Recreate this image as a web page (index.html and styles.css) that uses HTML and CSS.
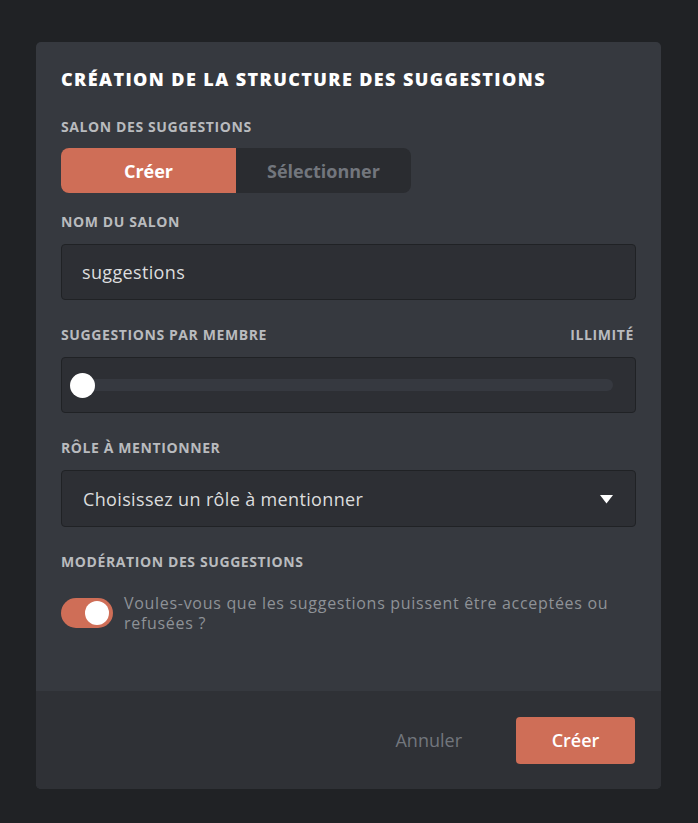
FILE: index.html
```html
<!DOCTYPE html>
<html lang="fr">
<head>
<meta charset="utf-8">
<title>Création de la structure des suggestions</title>
<link rel="stylesheet" href="styles.css">
</head>
<body>
<div class="modal">
  <div class="content">
    <h1 class="title">CRÉATION DE LA STRUCTURE DES SUGGESTIONS</h1>

    <div class="section first">
      <div class="label">SALON DES SUGGESTIONS</div>
      <div class="segmented">
        <div class="seg active">Créer</div>
        <div class="seg">Sélectionner</div>
      </div>
    </div>

    <div class="section">
      <div class="label">NOM DU SALON</div>
      <div class="field">suggestions</div>
    </div>

    <div class="section">
      <div class="label row">
        <span>SUGGESTIONS PAR MEMBRE</span>
        <span class="right">ILLIMITÉ</span>
      </div>
      <div class="field slider">
        <div class="track"><div class="knob"></div></div>
      </div>
    </div>

    <div class="section">
      <div class="label">RÔLE À MENTIONNER</div>
      <div class="field select">
        <span>Choisissez un rôle à mentionner</span>
        <svg class="caret" width="13" height="9" viewBox="0 0 13 9"><path d="M0 0H13L6.5 8.5Z" fill="#ffffff"/></svg>
      </div>
    </div>

    <div class="section">
      <div class="label">MODÉRATION DES SUGGESTIONS</div>
      <div class="switch-row">
        <div class="switch"><div class="switch-knob"></div></div>
        <div class="switch-text">Voules-vous que les suggestions puissent être acceptées ou refusées ?</div>
      </div>
    </div>
  </div>
  <div class="footer">
    <button class="btn-link">Annuler</button>
    <button class="btn-primary">Créer</button>
  </div>
</div>
</body>
</html>
```

FILE: styles.css
```css
html, body {
  margin: 0;
  padding: 0;
  background: #202225;
  font-family: "Open Sans", "Noto Sans", sans-serif;
}

body {
  width: 698px;
  height: 823px;
  overflow: hidden;
}

.modal {
  margin: 42px 0 0 36px;
  width: 625px;
  height: 747px;
  background: #36393f;
  border-radius: 5px;
  overflow: hidden;
  display: flex;
  flex-direction: column;
}

.content {
  flex: 1;
  padding: 25px 25px 0;
}

.title {
  margin: 0 0 27px;
  font-size: 18px;
  line-height: 24px;
  font-weight: 800;
  letter-spacing: 1.4px;
  color: #ffffff;
  white-space: nowrap;
}

.section {
  margin-top: 26px;
}

.section.first {
  margin-top: 0;
}

.first + .section {
  margin-top: 20px;
}

.label {
  font-size: 14px;
  line-height: 18px;
  font-weight: 700;
  letter-spacing: 0.6px;
  color: #b9bbbe;
  margin-bottom: 13px;
}

.section.first .label {
  margin-bottom: 12px;
}

.label.row {
  display: flex;
  justify-content: space-between;
  padding-right: 2px;
}

.segmented {
  display: flex;
  width: 350px;
  height: 45px;
  background: #2a2c30;
  border-radius: 8px;
  overflow: hidden;
}

.seg {
  flex: 1;
  display: flex;
  align-items: center;
  justify-content: center;
  font-size: 18px;
  font-weight: 700;
  color: #72767d;
}

.seg.active {
  background: #cf6e57;
  color: #ffffff;
}

.field {
  box-sizing: border-box;
  height: 56px;
  background: #2d2f34;
  border: 1px solid #202225;
  border-radius: 4px;
  display: flex;
  align-items: center;
  padding: 0 20px;
  font-size: 18px;
  letter-spacing: 0.35px;
  color: #dcddde;
}

.slider {
  padding: 0 22px 0 21px;
}

.track {
  position: relative;
  flex: 1;
  height: 12px;
  background: #363940;
  border-radius: 6px;
}

.knob {
  position: absolute;
  left: -13px;
  top: -6px;
  width: 25px;
  height: 25px;
  border-radius: 50%;
  background: #ffffff;
}

.select {
  height: 57px;
  justify-content: space-between;
  padding: 0 22px 0 21px;
}

.caret {
  display: block;
  margin-top: 2px;
}

.switch-row {
  display: flex;
  align-items: center;
  gap: 11px;
  margin-top: 22px;
}

.switch {
  box-sizing: border-box;
  flex: 0 0 auto;
  width: 52px;
  height: 30px;
  border-radius: 15px;
  background: #cf6e57;
  display: flex;
  align-items: center;
  justify-content: flex-end;
  padding-right: 4px;
}

.switch-knob {
  width: 24px;
  height: 24px;
  border-radius: 50%;
  background: #ffffff;
}

.switch-text {
  font-size: 16px;
  line-height: 20px;
  letter-spacing: 0.7px;
  color: #8e9297;
  padding-right: 20px;
}

.footer {
  height: 98px;
  background: #2f3136;
  display: flex;
  align-items: center;
  justify-content: flex-end;
  padding: 0 26px 0 0;
}

button {
  font-family: "Open Sans", "Noto Sans", sans-serif;
  font-size: 18px;
  border: none;
  cursor: pointer;
}

.btn-link {
  background: none;
  color: #72767d;
  padding: 0;
  margin-right: 54px;
}

.btn-primary {
  width: 119px;
  height: 47px;
  background: #cf6e57;
  color: #ffffff;
  font-weight: 600;
  border-radius: 4px;
}
```
